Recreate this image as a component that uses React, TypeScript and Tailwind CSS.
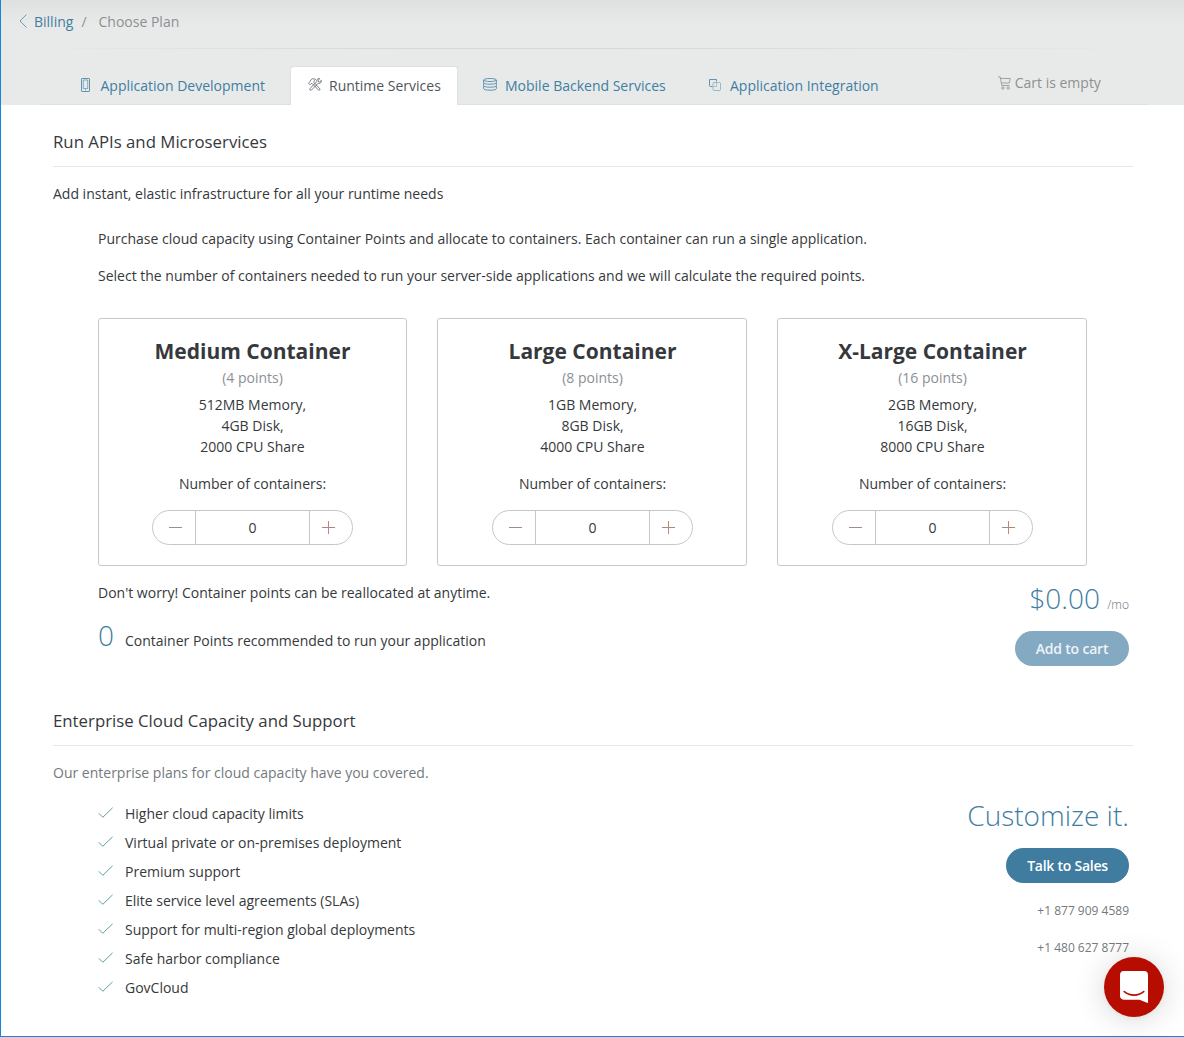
import React, { useState } from "react";

type IconProps = { className?: string };

const PhoneIcon = ({ className }: IconProps) => (
  <svg className={className} width="9" height="14" viewBox="0 0 9 14" fill="none" stroke="currentColor">
    <rect x="0.5" y="0.5" width="8" height="13" rx="0.6" strokeWidth="0.8" />
    <path d="M2.300 2v8.500h4.400V2z" strokeWidth="0.6" />
    <path d="M4 12h1" strokeWidth="0.8" />
  </svg>
);

const ToolsIcon = ({ className }: IconProps) => (
  <svg className={className} width="14" height="13" viewBox="0 0 14 13" fill="none" stroke="currentColor" strokeWidth="0.75" strokeLinejoin="round">
    <path d="M0.5 5.2 2 6.7l1.2-1.2 1.2.2 6.1 6.4c.9.6 2-.4 1.3-1.3L6 4.4C5.700 3.400 6 2.700 7.500 1.500 5.500.2 4 .7 2.900 1.800L1.900 3.700z" />
    <path d="M11.800.7C9.800.2 8.200 1.800 8.700 3.700L2 10.500c-.9 1.100.5 2.400 1.500 1.500l6.600-6.700c2 .6 3.700-1 3.200-3L11.700 3.900 10.300 3.600 10.100 2.300z" />
  </svg>
);

const DatabaseIcon = ({ className }: IconProps) => (
  <svg className={className} width="14" height="13" viewBox="0 0 14 13" fill="none" stroke="currentColor" strokeWidth="0.8">
    <ellipse cx="7" cy="2" rx="6.400" ry="1.500" />
    <path d="M.6 2v2.700c0 2 12.800 2 12.800 0V2M.6 5.200v2.500c0 2 12.800 2 12.800 0V5.200M.6 8.200v2.500c0 2 12.800 2 12.800 0V8.200" />
  </svg>
);

const LayersIcon = ({ className }: IconProps) => (
  <svg className={className} width="12" height="12" viewBox="0 0 12 12" fill="none" stroke="currentColor">
    <path d="M3.500 7.500h-2a1 1 0 0 1-1-1v-6h7v2" strokeWidth="0.8" />
    <rect x="4" y="3.500" width="7.500" height="8" rx="1" strokeWidth="0.9" opacity="0.5" />
    <path d="M7.500 4v3.500H4.500" strokeWidth="0.8" opacity="0.45" />
  </svg>
);

const CartIcon = ({ className }: IconProps) => (
  <svg className={className} width="13" height="14" viewBox="0 0 13 14" fill="none" stroke="currentColor" strokeWidth="0.8">
    <path d="M0 .9h2.200l1.600 8.600h7.700M2.600 2.500h9.700l-1 4.500H3.400" />
    <circle cx="4.900" cy="12" r="1.200" />
    <circle cx="10.200" cy="12" r="1.200" />
  </svg>
);

const CheckIcon = () => (
  <svg className="-mt-[2px] mr-[12px] shrink-0" width="15" height="12" viewBox="0 0 15 12" fill="none" stroke="#5f9c9c" strokeWidth="1">
    <path d="M.8 6.300 4.800 10.300 14.600.8" />
  </svg>
);

const tabs = [
  { label: "Application Development", Icon: PhoneIcon, tab: "w-[250px] pl-[41px]", icon: "mr-[10.500px] -mt-[1px]" },
  { label: "Runtime Services", Icon: ToolsIcon, tab: "w-[168px] pl-[17px] pb-px", icon: "mr-[7px] -mt-[2px]", active: true },
  { label: "Mobile Backend Services", Icon: DatabaseIcon, tab: "w-[226px] pl-[25px]", icon: "mr-[8px] -mt-[2px]" },
  { label: "Application Integration", Icon: LayersIcon, tab: "w-[464px] pl-[25px]", icon: "mr-[9px] -mt-[1px]" },
];

const containers = [
  { name: "Medium Container", points: 4, memory: "512MB", disk: "4GB", cpu: 2000 },
  { name: "Large Container", points: 8, memory: "1GB", disk: "8GB", cpu: 4000 },
  { name: "X-Large Container", points: 16, memory: "2GB", disk: "16GB", cpu: 8000 },
];

const benefits = [
  "Higher cloud capacity limits",
  "Virtual private or on-premises deployment",
  "Premium support",
  "Elite service level agreements (SLAs)",
  "Support for multi-region global deployments",
  "Safe harbor compliance",
  "GovCloud",
];

function Stepper({ value, onChange }: { value: number; onChange: (n: number) => void }) {
  return (
    <div className="mx-auto mt-[16px] flex h-[35px] w-[201px] overflow-hidden rounded-full border border-[#c5c8ca]">
      <button aria-label="Remove container" onClick={() => onChange(Math.max(0, value - 1))} className="flex w-[43px] items-center justify-center border-r border-[#c5c8ca] pl-[3px]">
        <span className="h-px w-[13px] bg-[#a08c88]" />
      </button>
      <span className="flex-1 text-center leading-[34px]">{value}</span>
      <button aria-label="Add container" onClick={() => onChange(value + 1)} className="flex w-[43px] items-center justify-center border-l border-[#c5c8ca] pr-[5px]">
        <svg width="13" height="13" viewBox="0 0 13 13" fill="none">
          <path d="M0 6.500h13" stroke="#a08c88" />
          <path d="M6.500 0v13" stroke="#cf8078" />
        </svg>
      </button>
    </div>
  );
}

export default function App() {
  const [counts, setCounts] = useState([0, 0, 0]);
  const total = counts.reduce((sum, n, i) => sum + n * containers[i].points, 0);

  return (
    <div className="h-[1037px] w-[1184px] overflow-hidden border-b border-l border-[#1883d7] bg-white font-['Open_Sans',sans-serif] text-[14px] leading-[21px] text-[#36393c]">
      <header className="flex h-[105px] flex-col bg-[#e8eae9] bg-[linear-gradient(to_bottom,#dfe0e0_0px,#e8eae9_24px)]">
        <nav className="flex h-[48px] items-center pb-[6px] pl-[17.500px] text-[#8b9095]">
          <svg className="mr-[7.500px]" width="8" height="14" viewBox="0 0 8 14" fill="none" stroke="#6f9bb2">
            <path d="M7.500.5 1 7l6.500 6.500" />
          </svg>
          <a className="text-[#3f7ea3]">Billing</a>
          <span className="ml-[8px]">/</span>
          <span className="ml-[12px]">Choose Plan</span>
        </nav>
        <div className="mx-[30px] h-px bg-[linear-gradient(to_right,transparent,#d4d7d7_35%,#d4d7d7_50%,transparent)]" />
        <div className="mt-[17px] flex h-[39px] pl-[39px]">
          {tabs.map(({ label, Icon, tab, icon, active }) => (
            <a
              key={label}
              className={`flex items-center border-[#dce1e5] ${tab} ${
                active ? "rounded-t-[4px] border-x border-t bg-white text-[#50565b]" : "border-b text-[#3f7ea3]"
              }`}
            >
              <Icon className={`shrink-0 ${icon}`} />
              <span className="whitespace-nowrap">{label}</span>
              {label === "Application Integration" && (
                <span className="ml-[119px] flex items-center whitespace-nowrap pb-[6px] text-[#8d9093]">
                  <CartIcon className="mr-[4px] mt-[1px]" />
                  Cart is empty
                </span>
              )}
            </a>
          ))}
        </div>
      </header>

      <main className="pl-[52px] pr-[51px]">
        <section>
          <h2 className="h-[62px] border-b border-[#e6e7e8] pt-[25px] text-[16.800px] leading-[24px]">Run APIs and Microservices</h2>
          <p className="mt-[16px]">Add instant, elastic infrastructure for all your runtime needs</p>
          <div className="ml-[45px] mr-[46px] mt-[24px]">
            <p>Purchase cloud capacity using Container Points and allocate to containers. Each container can run a single application.</p>
            <p className="mt-[16px]">Select the number of containers needed to run your server-side applications and we will calculate the required points.</p>
            <div className="mt-[32px] grid grid-cols-[309px_310px_310px] gap-[30px]">
              {containers.map((c, i) => (
                <article key={c.name} className={`h-[248px] rounded-[3px] border border-[#c5c8ca] pt-[17px] text-center ${i > 0 ? "pl-px" : ""}`}>
                  <h3 className="text-[21px] font-bold leading-[30px]">{c.name}</h3>
                  <p className="mt-[1px] text-[#8b9095]">({c.points} points)</p>
                  <p className="mt-[6px]">{c.memory} Memory,</p>
                  <p>{c.disk} Disk,</p>
                  <p>{c.cpu} CPU Share</p>
                  <p className="mt-[16px]">Number of containers:</p>
                  <Stepper value={counts[i]} onChange={(n) => setCounts(counts.map((v, k) => (k === i ? n : v)))} />
                </article>
              ))}
            </div>
          </div>
          <div className="ml-[45px] mr-[4px] flex h-[132px] justify-between">
            <div>
              <p className="mt-[16px]">Don't worry! Container points can be reallocated at anytime.</p>
              <p className="mt-[15px] flex items-baseline">
                <span className="mr-[11px] text-[28px] font-light leading-[34px] text-[#3f7ea3]">{total}</span>
                Container Points recommended to run your application
              </p>
            </div>
            <div className="flex flex-col items-end pt-[12px]">
              <p className="text-[28px] font-light leading-[40px] text-[#3f7ea3]">
                $0.00 <span className="text-[12px] text-[#6b7076]">/mo</span>
              </p>
              <button className="mt-[13px] h-[35px] w-[114px] shrink-0 -translate-y-[7px] rounded-full bg-[#84a9c2] font-semibold tracking-[-0.2px] text-[#edf3f7]">Add to cart</button>
            </div>
          </div>
        </section>

        <section>
          <h2 className="h-[48px] border-b border-[#e6e7e8] pt-[11px] text-[16.800px] leading-[24px]">Enterprise Cloud Capacity and Support</h2>
          <p className="mt-[16px] text-[#74797e]">Our enterprise plans for cloud capacity have you covered.</p>
          <div className="ml-[45px] mr-[4px] flex justify-between">
            <ul className="mt-[16px]">
              {benefits.map((b) => (
                <li key={b} className="flex h-[29px] items-center">
                  <CheckIcon />
                  {b}
                </li>
              ))}
            </ul>
            <div className="flex flex-col items-end pt-[12px]">
              <p className="text-[28px] font-light leading-[40px] text-[#3f7ea3]">Customize it.</p>
              <button className="mt-[13px] h-[35px] w-[123px] rounded-full bg-[#3f7ca0] font-semibold tracking-[-0.25px] text-white">Talk to Sales</button>
              <p className="mt-[17px] text-[12px] text-[#74797e]">+1 877 909 4589</p>
              <p className="mt-[16px] text-[12px] text-[#74797e]">+1 480 627 8777</p>
            </div>
          </div>
        </section>
      </main>

      <button aria-label="Open chat" className="fixed left-[1104px] top-[957px] flex size-[60px] items-center justify-center rounded-full bg-[#b70d00] shadow-[0_2px_32px_rgba(0,0,0,0.16),0_1px_6px_rgba(0,0,0,0.06)]">
        <svg width="28" height="32" viewBox="0 0 28 32">
          <path fill="#fff" d="M28 32s-4.714-1.855-8.527-3.340H3.437C1.540 28.660 0 27.026 0 25.013V3.644C0 1.633 1.540 0 3.437 0h21.125C26.460 0 28 1.633 28 3.644z" />
          <path d="M4.300 20.600c5.700 4.600 13.700 4.600 19.400 0" fill="none" stroke="#b70d00" strokeWidth="1.800" strokeLinecap="round" />
        </svg>
      </button>
    </div>
  );
}
